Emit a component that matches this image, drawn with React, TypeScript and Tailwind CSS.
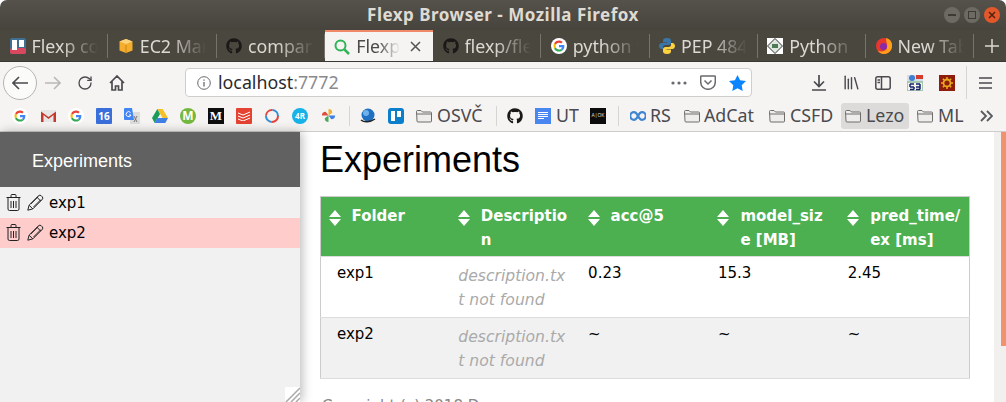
import type { ReactNode } from "react";
import { Library, RotateCw } from "lucide-react";
import { FaGithub } from "react-icons/fa";

function GoogleIcon({ size = 16 }: { size?: number }) {
  return (
    <svg width={size} height={size} viewBox="0 0 48 48">
      <circle cx="24" cy="24" r="24" fill="#fff" />
      <path fill="#EA4335" d="M24 14c3 0 5 1 6.500 2.500l4.500-4.500C32 9 28.500 7.500 24 7.500c-6.500 0-12 3.500-14.700 9l5.300 4C16 16.500 19.500 14 24 14z" />
      <path fill="#4285F4" d="M40 24.500c0-1.300-.1-2.300-.3-3.500H24v6.500h9c-.4 2.200-1.600 4-3.400 5.300l5.200 4C38.200 33.700 40 29.500 40 24.500z" />
      <path fill="#FBBC05" d="M14.600 28.500c-.4-1.300-.7-2.800-.7-4.300s.3-3 .7-4.300l-5.300-4C8.200 18.500 7.500 21.200 7.500 24s.7 5.500 1.800 7.900l5.300-3.400z" />
      <path fill="#34A853" d="M24 40.500c4.500 0 8.200-1.500 10.800-3.700l-5.200-4c-1.400 1-3.300 1.700-5.600 1.700-4.500 0-8-2.500-9.400-6l-5.300 3.400c2.700 5.200 8.200 8.600 14.700 8.600z" />
    </svg>
  );
}

function GithubMark() {
  return <FaGithub size={16} color="#1b1817" />;
}

function FolderIcon() {
  return (
    <svg width="16" height="14" viewBox="0 0 16 14" fill="#eeedeb" stroke="#6f6d6a">
      <path d="M.5 2.500a1 1 0 0 1 1-1h3.500l1.500 1.500h8a1 1 0 0 1 1 1v8a1 1 0 0 1-1 1h-12.500a1 1 0 0 1-1-1z" />
      <path d="M.5 5h15" fill="none" />
    </svg>
  );
}

function Square({ className, children }: { className: string; children?: ReactNode }) {
  return <div className={`flex h-4 w-4 items-center justify-center ${className}`}>{children}</div>;
}

function BookmarkSep() {
  return <div className="h-[20px] w-px bg-[#d6d5d3]" />;
}

function Slot({ children }: { children: ReactNode }) {
  return <div className="flex h-full w-[28px] shrink-0 items-center justify-center">{children}</div>;
}

const tabs: { title: string; icon: ReactNode; active?: boolean }[] = [
  {
    title: "Flexp console",
    icon: (
      <svg width="16" height="16" viewBox="0 0 16 16">
        <rect width="16" height="16" rx="2" fill="#3f6f92" />
        <rect y="10" width="16" height="6" rx="2" fill="#d9485f" />
        <rect x="2" y="2" width="5" height="10" fill="#fff" />
        <rect x="9" y="2" width="5" height="7" fill="#fff" />
      </svg>
    ),
  },
  {
    title: "EC2 Management",
    icon: (
      <svg width="16" height="16" viewBox="0 0 16 16">
        <path fill="#f4ad2d" d="M8 1l6.500 2.500v9L8 15l-6.500-2.500v-9z" />
        <path fill="#c9861b" d="M7.500 7h1v8h-1z" />
        <path fill="#fbd27b" d="M8 1l6.500 2.500L8 6 1.500 3.500z" />
      </svg>
    ),
  },
  { title: "compare", icon: <GithubMark /> },
  {
    title: "Flexp Browser",
    active: true,
    icon: (
      <svg width="16" height="16" viewBox="0 0 16 16" fill="none" stroke="#2fb457" strokeWidth="2">
        <circle cx="6.500" cy="6.500" r="5" />
        <path d="M10.500 10.500l4.500 4.500" strokeWidth="2.500" />
      </svg>
    ),
  },
  { title: "flexp/flexp", icon: <GithubMark /> },
  { title: "python find", icon: <GoogleIcon /> },
  {
    title: "PEP 484",
    icon: (
      <svg width="16" height="16" viewBox="0 0 16 16">
        <path fill="#3b76a8" d="M8 0C5 0 4 1 4 3v1.500h4.500V5H2.500C1 5 0 6.500 0 8s1 3 2.500 3H4V9c0-1.300 1-2 2.500-2h3C11 7 12 6 12 4.500V3c0-2-1-3-4-3z" />
        <path fill="#fdd23f" d="M8 16c3 0 4-1 4-3v-1.500H7.500V11h6c1.500 0 2.500-1.500 2.500-3s-1-3-2.500-3H12v2c0 1.300-1 2-2.500 2h-3C5 9 4 10 4 11.500V13c0 2 1 3 4 3z" />
      </svg>
    ),
  },
  {
    title: "Python type",
    icon: (
      <svg width="16" height="16" viewBox="0 0 16 16">
        <rect width="16" height="16" fill="#fff" />
        <path d="M8 .5L15.500 8 8 15.500.5 8z" fill="#dfe8df" stroke="#333" />
        <rect x="5" y="6" width="6" height="4" fill="#4f7a58" />
      </svg>
    ),
  },
  {
    title: "New Tab",
    icon: (
      <svg width="16" height="16" viewBox="0 0 16 16">
        <circle cx="8" cy="8" r="8" fill="#e6372e" />
        <path fill="#ff9f1c" d="M10 0a8 8 0 0 1 6 8c0 4-3 8-8 8-3 0-5-1.500-6-3.500 3 2 8 1 9-3 .7-3-1-5-1-9.500z" />
        <circle cx="7.500" cy="8.500" r="3.500" fill="#8a2aa8" />
      </svg>
    ),
  },
];

function Tab({ title, icon, active }: { title: string; icon: ReactNode; active?: boolean }) {
  if (active) {
    return (
      <div className="flex h-full w-[108.25px] shrink-0 items-center border-t-2 border-[#f0896a] bg-[#f5f4f3] pl-[9.5px] text-[#4a4a4a]">
        <span className="shrink-0">{icon}</span>
        <span className="ml-[6px] w-[44px] overflow-hidden whitespace-nowrap [mask-image:linear-gradient(to_right,black_50%,transparent)]">{title}</span>
        <svg className="ml-[10px] shrink-0" width="11" height="11" viewBox="0 0 11 11" stroke="#55534f" strokeWidth="1.500">
          <path d="M1 1l9 9M10 1l-9 9" />
        </svg>
      </div>
    );
  }
  return (
    <div className="flex h-full w-[108.25px] shrink-0 items-center pl-[9.5px] text-[#dcd9d2]">
      <span className="shrink-0">{icon}</span>
      <span className="mt-[2px] ml-[6px] w-[66px] overflow-hidden whitespace-nowrap [mask-image:linear-gradient(to_right,black_45%,transparent)]">{title}</span>
      <div className="ml-auto h-[24px] w-px bg-[#77746d]" />
    </div>
  );
}

function SortIcon() {
  return (
    <svg className="mt-[5px] shrink-0" width="12" height="16" viewBox="0 0 12 16" fill="#fff">
      <path d="M6 0l6 7H0zM0 9h12l-6 7z" />
    </svg>
  );
}

function TrashIcon() {
  return (
    <svg width="15" height="17" viewBox="0 0 15 17" fill="none" stroke="#222" strokeWidth="1">
      <path d="M.5 3.500h14M5 3.500V1.500a1 1 0 0 1 1-1h3a1 1 0 0 1 1 1v2" />
      <path d="M2 3.500v11.500a1.500 1.500 0 0 0 1.500 1.500h8a1.500 1.500 0 0 0 1.500-1.500V3.500" />
      <path d="M5 7v7M7.500 7v7M10 7v7" />
    </svg>
  );
}

function PencilIcon() {
  return (
    <svg width="17" height="17" viewBox="0 0 17 17" fill="none" stroke="#222" strokeWidth="1">
      <path d="M.8 16.200l1.300-5 9.400-9.400a2 2 0 0 1 2.800 0l.9.900a2 2 0 0 1 0 2.800l-9.400 9.400z" />
      <path d="M10 3.300l3.700 3.700M2.100 11.200l3.700 3.700M3.800 10l7.500-7.500M6.500 13l7.500-7.500" />
    </svg>
  );
}

function SidebarItem({ name, selected }: { name: string; selected?: boolean }) {
  return (
    <div className={`flex h-[30.5px] items-center pl-[6px] text-[15px] text-black ${selected ? "bg-[#ffcccc]" : ""}`}>
      <TrashIcon />
      <span className="ml-[6px]"><PencilIcon /></span>
      <span className="mt-[1px] ml-[5px]">{name}</span>
    </div>
  );
}

const headers = ["Folder", "Description", "acc@5", "model_size [MB]", "pred_time/ex [ms]"];

function Row({ name, values, shaded }: { name: string; values: string[]; shaded?: boolean }) {
  return (
    <tr className={`h-[61px] border-b border-[#dddddd] align-top ${shaded ? "bg-[#f1f1f1]" : "bg-white"}`}>
      <td className="pt-[5px] pl-[16px]">{name}</td>
      <td className="break-all pt-[7px] pr-[12px] pl-[8px] text-[15.6px] italic leading-[24px] text-[#aaaaaa]">description.txt not found</td>
      {values.map((v, i) => (
        <td key={i} className="pt-[5px] pl-[8px]">{v}</td>
      ))}
    </tr>
  );
}

export default function App() {
  return (
    <div className="flex h-[402px] w-[1006px] flex-col overflow-hidden rounded-t-[7px] bg-white font-['Noto_Sans',sans-serif] text-[17.8px]">
      {/* Title bar */}
      <div className="relative flex h-[30px] shrink-0 items-center justify-center bg-gradient-to-b from-[#55524c] to-[#47443e] text-[17px] font-bold tracking-[0.5px] text-[#dfdbd2]">
        Flexp Browser - Mozilla Firefox
        <div className="absolute top-[7px] right-[6px] flex gap-[4px]">
          <div className="flex h-[16px] w-[16px] items-center justify-center rounded-full bg-[#6d6a64]"><div className="h-[2px] w-[8px] bg-[#3c3a35]" /></div>
          <div className="flex h-[16px] w-[16px] items-center justify-center rounded-full bg-[#6d6a64]"><div className="h-[8px] w-[8px] border border-[#3c3a35]" /></div>
          <div className="flex h-[16px] w-[16px] items-center justify-center rounded-full bg-[#e2582a]">
            <svg width="8" height="8" viewBox="0 0 8 8" stroke="#52200f" strokeWidth="1.500"><path d="M1 1l6 6M7 1L1 7" /></svg>
          </div>
        </div>
      </div>

      {/* Tabs */}
      <div className="flex h-[32px] shrink-0 items-center border-b border-[#3a3833] bg-[#4a473f]">
        {tabs.map((t) => (
          <Tab key={t.title} title={t.title} icon={t.icon} active={t.active} />
        ))}
        <svg className="ml-[11px]" width="14" height="14" viewBox="0 0 14 14" stroke="#dcd9d2" strokeWidth="1.500">
          <path d="M7 0v14M0 7h14" />
        </svg>
      </div>

      {/* Nav bar */}
      <div className="flex h-[39px] shrink-0 items-center bg-[#f5f4f3] pt-[2px] text-[#4a4a4f]">
        <div className="ml-[3px] flex h-[34px] w-[34px] shrink-0 items-center justify-center rounded-full border border-[#b5b4b2] bg-[#fbfbfa]">
          <svg width="16" height="14" viewBox="0 0 16 14" fill="none" stroke="#4a4a4f" strokeWidth="1.600"><path d="M16 7H1M7 1L1 7l6 6" /></svg>
        </div>
        <div className="flex w-[32px] justify-center">
          <svg width="16" height="14" viewBox="0 0 16 14" fill="none" stroke="#b9b8b6" strokeWidth="1.600"><path d="M0 7h15M9 1l6 6-6 6" /></svg>
        </div>
        <div className="flex w-[32px] justify-center"><RotateCw size={16} strokeWidth={2} color="#4a4a4f" /></div>
        <div className="flex w-[32px] justify-center">
          <svg width="16" height="16" viewBox="0 0 16 16" fill="none" stroke="#4a4a4f" strokeWidth="1.700"><path d="M1 8l7-7 7 7M3 6.500V15h3.500v-4h3v4H13V6.500" /></svg>
        </div>
        <div className="ml-[52px] flex h-[29px] w-[567px] shrink-0 items-center rounded-[4px] border border-[#cfcecc] bg-white pr-[5px] pl-[11px]">
          <svg width="14" height="14" viewBox="0 0 14 14" fill="none" stroke="#6a6a6e">
            <circle cx="7" cy="7" r="6.300" />
            <path d="M7 6v4.500M7 3.500v1.200" strokeWidth="1.300" />
          </svg>
          <span className="ml-[7px] text-[#2a2a2e]">localhost<span className="text-[#8a8a8e]">:7772</span></span>
          <div className="ml-auto flex items-center gap-[13px]">
            <svg width="16" height="4" viewBox="0 0 16 4" fill="#6a6a6e"><circle cx="2" cy="2" r="1.600" /><circle cx="8" cy="2" r="1.600" /><circle cx="14" cy="2" r="1.600" /></svg>
            <svg width="16" height="15" viewBox="0 0 16 15" fill="none" stroke="#6a6a6e" strokeWidth="1.500"><path d="M1.500 1h13a.8.8 0 0 1 .8.8V7a7.300 7.300 0 0 1-14.600 0V1.800a.8.8 0 0 1 .8-.8z" /><path d="M4.500 5.500L8 9l3.500-3.500" /></svg>
            <svg width="17" height="16" viewBox="0 0 17 16" fill="#0a84ff"><path d="M8.500 0l2.600 5.300 5.900.8-4.300 4.100 1 5.800-5.200-2.700L3.300 16l1-5.800L0 6.100l5.900-.8z" /></svg>
          </div>
        </div>
        <div className="ml-[51px] flex w-[32px] justify-center">
          <svg width="14" height="16" viewBox="0 0 14 16" fill="none" stroke="#4a4a4f" strokeWidth="1.700"><path d="M7 0v11M2 6.500L7 11.500l5-5M0 15h14" /></svg>
        </div>
        <div className="flex w-[32px] justify-center"><Library size={19} strokeWidth={1.800} color="#4a4a4f" /></div>
        <div className="flex w-[32px] justify-center">
          <svg width="16" height="14" viewBox="0 0 16 14" fill="none" stroke="#4a4a4f" strokeWidth="1.500"><rect x=".8" y=".8" width="14.400" height="12.400" rx="2" /><path d="M6.500 1v12M2.500 4h2.500M2.500 6.500h2.500" /></svg>
        </div>
        <div className="flex w-[32px] justify-center">
          <svg width="16" height="16" viewBox="0 0 16 16">
            <rect width="16" height="16" fill="#d5dfe9" />
            <rect x="9" width="7" height="4" fill="#d43d2e" />
            <circle cx="5" cy="3" r="3" fill="#3f7fd1" />
            <rect y="6" width="16" height="10" fill="#4f9b4a" opacity=".35" />
            <path d="M1 8h14v7H1z" fill="#f4f4e8" />
            <path d="M3 9h4M3 12h4M3 14.500h4M9 9h4M9 12h4M9 14.500h4M3 9v3M7 12v2.500M13 9v5.500" stroke="#16226f" strokeWidth="1.500" />
          </svg>
        </div>
        <div className="flex w-[32px] justify-center">
          <svg width="16" height="16" viewBox="0 0 16 16">
            <rect width="16" height="16" fill="#8f1d0d" />
            <circle cx="8" cy="8" r="3.500" fill="none" stroke="#eaa91d" strokeWidth="1.800" />
            <path d="M8 2v3M8 11v3M2 8h3M11 8h3M3.800 3.800l2 2M10.200 10.200l2 2M3.800 12.200l2-2M10.200 5.800l2-2" stroke="#eaa91d" strokeWidth="1.500" />
          </svg>
        </div>
        <div className="ml-[3px] h-[33px] w-px bg-[#d6d5d3]" />
        <div className="ml-[2px] flex w-[32px] justify-center">
          <svg width="13" height="12" viewBox="0 0 13 12" stroke="#4a4a4f" strokeWidth="1.600"><path d="M0 1h13M0 6h13M0 11h13" /></svg>
        </div>
      </div>

      {/* Bookmarks */}
      <div className="flex h-[31px] shrink-0 items-center border-b border-[#cccccc] bg-[#f5f4f3] pb-[1px] pl-[6px] text-[#4a4a4f]">
        <Slot><GoogleIcon /></Slot>
        <Slot>
          <svg width="15" height="12" viewBox="0 0 15 12">
            <rect width="15" height="12" fill="#e6e6e6" />
            <path d="M0 12V1.500L7.500 7 15 1.500V12h-2.500V5L7.500 9 2.500 5v7z" fill="#c5392b" />
          </svg>
        </Slot>
        <Slot><GoogleIcon /></Slot>
        <Slot>
          <Square className="rounded-[1px] bg-[#3a6fdb] text-[10px] font-bold text-white"><span className="mt-[2px]">16</span></Square>
        </Slot>
        <Slot>
          <svg width="16" height="16" viewBox="0 0 16 16">
            <rect x="6" y="4" width="10" height="12" fill="#dcdcdc" />
            <path d="M10 8l3 6M13 8l-3 6" stroke="#777" />
            <path d="M0 1a1 1 0 0 1 1-1h7l2 12H1a1 1 0 0 1-1-1z" fill="#4285f4" />
            <path d="M6.500 4.500A2.500 2.500 0 1 0 7 7H5" fill="none" stroke="#fff" />
          </svg>
        </Slot>
        <Slot>
          <svg width="16" height="14" viewBox="0 0 16 14">
            <path d="M5.300 0h5.400L16 9h-5.400z" fill="#f5bf2a" />
            <path d="M5.300 0L0 9l2.700 5 5.300-9z" fill="#1b9c5b" />
            <path d="M2.700 14h10.600L16 9H5.400z" fill="#3f7fe6" />
          </svg>
        </Slot>
        <Slot>
          <div className="flex h-4 w-4 items-center justify-center rounded-full bg-[#74b83f] text-[12px] font-bold leading-none text-white">M</div>
        </Slot>
        <Slot>
          <Square className="bg-[#0e0e0e] font-['Liberation_Serif',serif] text-[13px] font-bold text-white">M</Square>
        </Slot>
        <Slot>
          <Square className="rounded-[1px] bg-[#e44332]">
            <svg width="12" height="10" viewBox="0 0 12 10" fill="none" stroke="#fff"><path d="M0 2l5 2 7-3M0 5l5 2 7-3M0 8l5 2 7-3" /></svg>
          </Square>
        </Slot>
        <Slot>
          <svg width="16" height="16" viewBox="0 0 16 16" fill="none" strokeWidth="2">
            <circle cx="8" cy="8" r="6" stroke="#e2463a" strokeDasharray="9.400 9.400" />
            <circle cx="8" cy="8" r="6" stroke="#2f8fd8" strokeDasharray="9.400 9.400" strokeDashoffset="9.400" />
          </svg>
        </Slot>
        <Slot>
          <div className="flex h-4 w-4 items-center justify-center rounded-full bg-[#16b2e8] text-[8px] font-bold leading-none text-white">4R</div>
        </Slot>
        <Slot>
          <svg width="15" height="15" viewBox="0 0 16 16">
            <path d="M8 8V1a4 4 0 0 1 4 4z" fill="#f0b22e" />
            <path d="M8 8h7a4 4 0 0 1-4 4z" fill="#3f7fe6" />
            <path d="M8 8v7a4 4 0 0 1-4-4z" fill="#49a956" />
            <path d="M8 8H1a4 4 0 0 1 4-4z" fill="#df4b3e" />
          </svg>
        </Slot>
        <div className="ml-[7px]"><BookmarkSep /></div>
        <div className="ml-[4px]">
          <Slot>
            <svg width="16" height="16" viewBox="0 0 16 16">
              <circle cx="8" cy="7" r="6.500" fill="#1f6fc2" />
              <circle cx="6" cy="5" r="3" fill="#6fb2ea" />
              <path d="M1 12c3 2.500 9 2.500 14-1" fill="none" stroke="#222" strokeWidth="1.500" />
            </svg>
          </Slot>
        </div>
        <Slot>
          <Square className="rounded-[3px] bg-[#0c7fcc]">
            <div className="flex items-start gap-[2px]">
              <div className="h-[10px] w-[4px] bg-white" />
              <div className="h-[6px] w-[4px] bg-white" />
            </div>
          </Square>
        </Slot>
        <Slot><FolderIcon /></Slot>
        <span className="-ml-px w-[59px] shrink-0 whitespace-nowrap">OSVČ</span>
        <BookmarkSep />
        <div className="ml-[4px]"><Slot><GithubMark /></Slot></div>
        <Slot>
          <Square className="bg-[#4a86f0]">
            <svg width="10" height="8" viewBox="0 0 10 8" stroke="#fff"><path d="M0 .5h10M0 2.500h10M0 4.500h10M0 6.500h6" /></svg>
          </Square>
        </Slot>
        <span className="-ml-px w-[28px] shrink-0 whitespace-nowrap">UT</span>
        <Slot>
          <Square className="bg-[#0c0c0c] text-[5px] leading-none text-[#dddddd]">A|OK</Square>
        </Slot>
        <div className="ml-[6px]"><BookmarkSep /></div>
        <div className="ml-[5px]">
          <Slot>
            <svg width="16" height="10" viewBox="0 0 16 10" fill="none" stroke="#3f86d0" strokeWidth="2.200">
              <path d="M8 5C6.500 2 5.500 1.200 4 1.200a3.800 3.800 0 0 0 0 7.600C5.500 8.800 6.500 8 8 5c1.500-3 2.500-3.800 4-3.800a3.800 3.800 0 0 1 0 7.600C10.500 8.800 9.500 8 8 5z" />
            </svg>
          </Slot>
        </div>
        <span className="-ml-[2px] w-[28px] shrink-0 whitespace-nowrap">RS</span>
        <Slot><FolderIcon /></Slot>
        <span className="-ml-[2px] w-[59px] shrink-0 whitespace-nowrap">AdCat</span>
        <Slot><FolderIcon /></Slot>
        <span className="-ml-px w-[51px] shrink-0 whitespace-nowrap">CSFD</span>
        <div className="flex h-[26px] w-[68px] shrink-0 items-center rounded-[3px] bg-[#dcdbd9] pl-[4px]">
          <FolderIcon />
          <span className="ml-[5px] whitespace-nowrap">Lezo</span>
        </div>
        <div className="ml-[2px]"><Slot><FolderIcon /></Slot></div>
        <span className="-ml-px whitespace-nowrap">ML</span>
        <svg className="mr-[13px] ml-auto" width="13" height="12" viewBox="0 0 13 12" fill="none" stroke="#5a5a5e" strokeWidth="1.800">
          <path d="M1 1l5 5-5 5M7 1l5 5-5 5" />
        </svg>
      </div>

      {/* Page */}
      <div className="flex min-h-0 flex-1 bg-white font-['DejaVu_Sans',sans-serif] text-[15px]">
        <aside className="relative z-10 flex w-[300px] shrink-0 flex-col bg-[#f1f1f1] shadow-[2px_0_10px_rgba(0,0,0,0.28)]">
          <div className="flex h-[55px] shrink-0 items-center bg-[#616161] pt-[3px] pl-[32px] font-['Liberation_Sans',sans-serif] text-[18px] text-white">Experiments</div>
          <SidebarItem name="exp1" />
          <SidebarItem name="exp2" selected />
          <div className="absolute right-0 bottom-0 h-[15px] w-[15px] bg-white">
            <svg width="15" height="15" viewBox="0 0 15 15" stroke="#aaaaaa" strokeWidth="1.500"><path d="M1 15L15 1M6 15l9-9M11 15l4-4" /></svg>
          </div>
        </aside>

        <main className="min-w-0 flex-1 pr-[24px] pl-[20px]">
          <h1 className="mt-[7px] h-[57px] font-['Liberation_Sans',sans-serif] text-[36px] leading-[42px] text-black">Experiments</h1>
          <table className="w-[650px] table-fixed border-collapse border border-[#cccccc] leading-[23px] text-black">
            <thead>
              <tr className="h-[60px] border-b border-[#dddddd] bg-[#4caf50] align-top text-white">
                {headers.map((label) => (
                  <th key={label} className="pt-[8px] pr-[8px] pl-[7.5px] text-left font-bold leading-[23.5px]">
                    <div className="flex">
                      <SortIcon />
                      <span className="ml-[11px] min-w-0 break-all">{label}</span>
                    </div>
                  </th>
                ))}
              </tr>
            </thead>
            <tbody>
              <Row name="exp1" values={["0.23", "15.3", "2.45"]} />
              <Row name="exp2" values={["~", "~", "~"]} shaded />
            </tbody>
          </table>
          <p className="mt-[16px] pl-[2px] text-[15px] text-[#888888]">Copyright (c) 2018 D.</p>
        </main>

        <div className="flex w-[12px] shrink-0 justify-end bg-[#f1f0ee]">
          <div className="h-[214px] w-[5px] bg-[#f1926c]" />
        </div>
      </div>
    </div>
  );
}
